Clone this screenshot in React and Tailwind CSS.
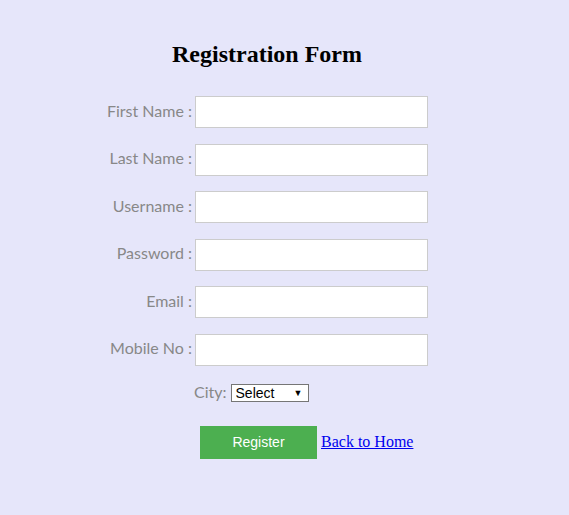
import React from "react";

const fields = ["First Name", "Last Name", "Username", "Password", "Email", "Mobile No"];

export default function App() {
  return (
    <div className="min-h-screen bg-[#e6e6fa]">
      <div className="w-[534px] pt-[40px]">
        <h1 className="text-center font-['Liberation_Serif',serif] font-bold text-[24px] leading-[28px] text-black">
          Registration Form
        </h1>

        <form className="mt-[28px]" onSubmit={(e) => e.preventDefault()}>
          {fields.map((name, i) => (
            <div
              key={name}
              className={`flex items-center ${i > 0 ? "mt-[15.6px]" : ""}`}
            >
              <label className="w-[192px] pb-[3px] text-right font-['Lato',sans-serif] text-[16px] text-[#888]">
                {name} :
              </label>
              <input
                type={name === "Password" ? "password" : "text"}
                className="ml-[3px] w-[233px] h-[32px] bg-white border border-[#ccc] outline-none px-2"
              />
            </div>
          ))}

          <div className="flex items-center h-[18px] pl-[194px] mt-[18px]">
            <span className="pb-[2px] font-['Lato',sans-serif] text-[16px] text-[#888]">City:</span>
            <div className="relative ml-[4px]">
              <select className="block appearance-none w-[78px] h-[18px] bg-white border border-[#767676] pl-[4px] font-['Liberation_Sans',sans-serif] text-[14px] leading-[16px] text-black outline-none">
                <option>Select</option>
                <option>Delhi</option>
                <option>Mumbai</option>
                <option>Chennai</option>
              </select>
              <span className="pointer-events-none absolute right-[6px] top-[4px] text-[9px] leading-[10px] text-black">
                ▼
              </span>
            </div>
          </div>

          <div className="flex items-center pl-[200px] mt-[24px]">
            <button
              type="submit"
              className="w-[117px] h-[33px] bg-[#4caf50] text-white font-['Liberation_Sans',sans-serif] text-[14px]"
            >
              Register
            </button>
            <a
              href="#"
              className="ml-[4px] font-['Liberation_Serif',serif] text-[16px] text-[#0000ee] underline"
            >
              Back to Home
            </a>
          </div>
        </form>
      </div>
    </div>
  );
}
